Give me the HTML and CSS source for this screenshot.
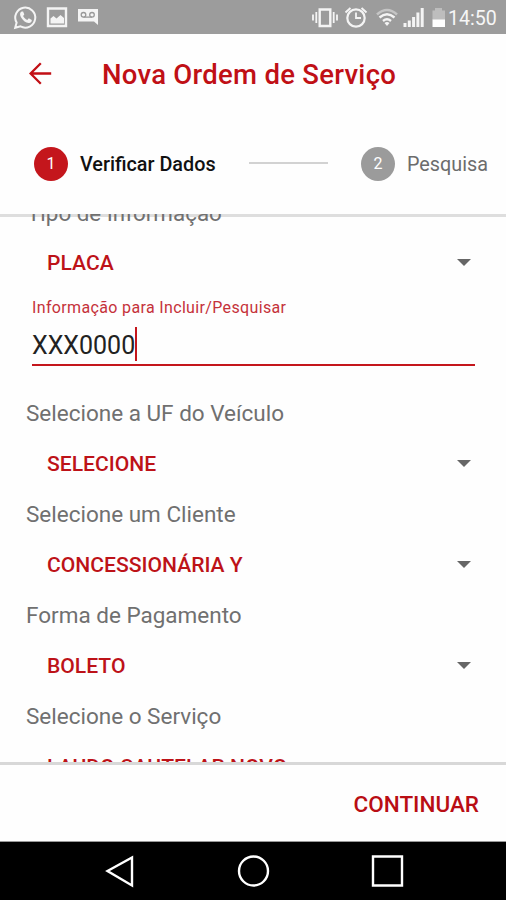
FILE: index.html
```html
<!DOCTYPE html>
<html lang="pt-BR">
<head>
<meta charset="utf-8">
<title>Nova Ordem de Serviço</title>
<link rel="stylesheet" href="styles.css">
</head>
<body>
<div class="statusbar">
  <svg width="110" height="34" viewBox="0 0 110 34" fill="none" stroke="#f4f4f4">
    <path d="M15.200 27.800l1.400-5.200a10 10 0 1 1 3.900 3.800z" stroke-width="2"/>
    <path d="M21.600 11.500c-2 1-2 3.600-.3 6.300 2 3.300 4.800 5.400 7.800 5.100 1.800-.2 2.800-1.300 2.700-3l-3-1.600-1.500 1.700c-2-.8-3.300-2-4.200-3.900l1.200-1.500-1.200-3z" fill="#f4f4f4" stroke="none"/>
    <path d="M48 8.500h18v17.500H48z" stroke-width="2.400"/>
    <path d="M50.500 23.500v-5l3-2.500 3 2.500 4-3.500 3.500 3v5.500z" fill="#f4f4f4" stroke="none"/>
    <path d="M78 9h20v16l-4-3.500H78z" fill="#f4f4f4" stroke="none"/>
    <g stroke="#999" stroke-width="1.300"><circle cx="83.500" cy="14.800" r="2.300"/><circle cx="92" cy="14.800" r="2.300"/><path d="M83.500 17.100H92"/></g>
  </svg>
  <div class="statusbar-right">
    <svg width="140" height="34" viewBox="308 0 140 34" fill="none" stroke="#f4f4f4">
      <path d="M319.700 9.500h10.600v16.500h-10.600z" stroke-width="2.400"/>
      <path d="M316.300 12v11M333.700 12v11M313 14.500v6M337 14.500v6" stroke-width="1.800"/>
      <circle cx="356" cy="18" r="8.700" stroke-width="2.200"/>
      <path d="M356 12.500V18h5" stroke-width="1.800"/>
      <path d="M345.500 12.500l5-4.500M366.500 12.500l-5-4.500" stroke-width="2"/>
      <path d="M377 14.500q10-9 20 0" stroke="#c5c5c5" stroke-width="2.500"/>
      <path d="M379.500 17.500q7.500-6.500 15 0M383 21q4-3.400 8 0" stroke-width="2.400"/>
      <path d="M384.500 23q2.500-2 5 0l-2.500 3z" fill="#f4f4f4" stroke="none"/>
      <path d="M405 27v-4M409.300 27v-6.500M413.600 27V17M417.900 27V12.500M422.200 27V8" stroke-width="3"/>
      <path d="M432.500 10.500h2.500V8h7v2.500h3V20h-12.500z" fill="#bdbdbd" stroke="none"/>
      <path d="M432.500 19.500H445V27h-12.500z" fill="#fff" stroke="none"/>
    </svg>
    <span class="clock">14:50</span>
  </div>
</div>
<header class="appbar">
  <svg class="back" width="24" height="24" viewBox="0 0 24 24" fill="none" stroke="#c20f15" stroke-width="2.300"><path d="M23.200 12.500H2.500M12.800 2.300L2.600 12.500l10.200 10.200"/></svg>
  <h1 class="title">Nova Ordem de Serviço</h1>
</header>
<nav class="stepper">
  <span class="dot dot-active">1</span>
  <span class="step step-active">Verificar Dados</span>
  <span class="connector"></span>
  <span class="dot">2</span>
  <span class="step">Pesquisa</span>
</nav>
<main class="content">
  <div class="form">
    <div class="label label-first">Tipo de Informação</div>
    <div class="select select-first"><span>PLACA</span><i class="caret"></i></div>
    <div class="field">
      <div class="hint">Informação para Incluir/Pesquisar</div>
      <div class="input"><span class="typed">XXX0000</span><i class="cursor"></i></div>
    </div>
    <div class="label">Selecione a UF do Veículo</div>
    <div class="select"><span>SELECIONE</span><i class="caret"></i></div>
    <div class="label">Selecione um Cliente</div>
    <div class="select"><span>CONCESSIONÁRIA Y</span><i class="caret"></i></div>
    <div class="label">Forma de Pagamento</div>
    <div class="select"><span>BOLETO</span><i class="caret"></i></div>
    <div class="label">Selecione o Serviço</div>
    <div class="select"><span>LAUDO CAUTELAR NOVO</span><i class="caret"></i></div>
  </div>
</main>
<footer class="actions"><span class="continue">CONTINUAR</span></footer>
<div class="navbar">
  <svg width="506" height="58" viewBox="0 842 506 58" fill="none" stroke="#fff" stroke-width="2.400">
    <path d="M132 857.500v28l-24.500-14.500z"/>
    <circle cx="253.500" cy="871" r="14.500"/>
    <path d="M373 856.500h29v29h-29z"/>
  </svg>
</div>
</body>
</html>
```
FILE: styles.css
```css
* { box-sizing: border-box; }
body {
  margin: 0;
  width: 506px;
  height: 900px;
  display: flex;
  flex-direction: column;
  overflow: hidden;
  background: #fefefe;
  font-family: Roboto, "Liberation Sans", sans-serif;
}
svg { display: block; }
.statusbar {
  height: 34px;
  flex: none;
  background: #9c9c9c;
  display: flex;
  justify-content: space-between;
}
.statusbar-right { display: flex; align-items: center; padding-right: 9px; }
.clock { color: #f6f6f6; font-size: 19.600px; line-height: 34px; padding-top: 3px; width: 49px; white-space: nowrap; }
.appbar { height: 80px; flex: none; display: flex; align-items: center; padding-left: 28px; }
.back { margin-top: -2px; }
.title { margin: 2px 0 0 50px; font-size: 27.500px; font-weight: 500; color: #c01016; line-height: 36px; letter-spacing: .27px; white-space: nowrap; }
.stepper { height: 100px; flex: none; display: flex; align-items: center; padding-left: 34px; }
.dot {
  width: 34px;
  height: 34px;
  border-radius: 50%;
  background: #9b9b9b;
  color: #fff;
  font-size: 16px;
  line-height: 34px;
  text-align: center;
}
.dot-active { background: #c4161c; }
.step { margin-left: 12px; font-size: 19.800px; color: #6c6c6c; white-space: nowrap; }
.step-active { width: 137px; font-weight: 500; color: #111; }
.connector { width: 79px; height: 2px; background: #d2d2d2; margin: -2px 33px 0 32px; }
.content {
  flex: none;
  height: 551px;
  overflow: hidden;
  background: linear-gradient(#dedede, #dedede) top / 100% 3px no-repeat;
  border-bottom: 3px solid #d8d8d8;
}
.form { margin-top: -26px; }
.label {
  height: 50px;
  line-height: 50px;
  padding-left: 26px;
  font-size: 22.500px;
  color: #707070;
  white-space: nowrap;
}
.label-first { padding-left: 27px; font-size: 22.400px; }
.select {
  height: 50.900px;
  line-height: 51px;
  padding: 0 35px 0 47px;
  display: flex;
  align-items: center;
  justify-content: space-between;
  font-size: 21.100px;
  font-weight: 500;
  color: #bd1218;
}
.select-first { padding-bottom: 2px; }
.caret { border: 7px solid transparent; border-top-color: #666; border-bottom: 0; }
.field { padding: 8px 31px 0 32px; height: 99px; }
.hint { font-size: 16px; line-height: 22px; letter-spacing: .35px; color: #c5323a; white-space: nowrap; }
.input { height: 47px; border-bottom: 2px solid #c4161c; display: flex; align-items: center; font-size: 25px; color: #222; padding-top: 6px; }
.typed { padding-top: 2px; }
.cursor { width: 2px; height: 34px; background: #c4161c; }
.actions { flex: none; height: 77px; display: flex; align-items: center; justify-content: flex-end; padding: 2px 27px 0 0; border-bottom: 1px solid #999; }
.continue { font-size: 22.500px; color: #b90e14; font-weight: 500; }
.navbar { flex: none; height: 58px; background: #000; }
```
